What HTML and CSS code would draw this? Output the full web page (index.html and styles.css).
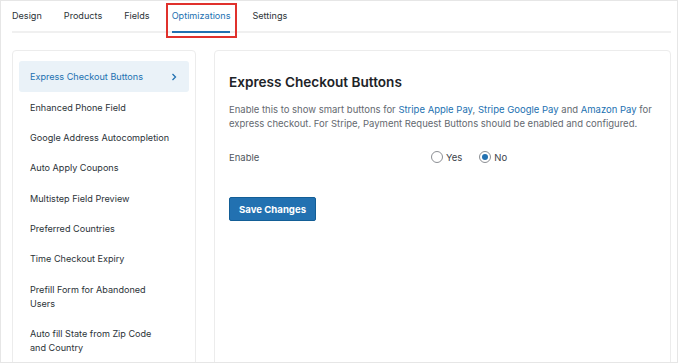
FILE: index.html
```html
<!DOCTYPE html>
<html lang="en">
	<head>
		<meta charset="UTF-8" />
		<meta name="viewport" content="width=device-width, initial-scale=1.0" />
		<title>Optimizations</title>
		<link rel="stylesheet" href="styles.css">
	</head>
	<body>
		<div class="frame">
			<nav class="tabs">
				<a class="tab">Design</a>
				<a class="tab">Products</a>
				<a class="tab">Fields</a>
				<a class="tab active">Optimizations</a>
				<a class="tab">Settings</a>
			</nav>

			<div class="layout">
				<aside class="sidebar">
					<a class="side-item active">
						<span class="side-label">Express Checkout Buttons</span>
						<svg class="chevron" width="6" height="8" viewBox="0 0 6 8"><path d="M1.5 1 L4.5 4 L1.5 7" fill="none" stroke="#2271b1" stroke-width="1.3" /></svg>
					</a>
					<a class="side-item"><span class="side-label">Enhanced Phone Field</span></a>
					<a class="side-item"><span class="side-label">Google Address Autocompletion</span></a>
					<a class="side-item"><span class="side-label">Auto Apply Coupons</span></a>
					<a class="side-item"><span class="side-label">Multistep Field Preview</span></a>
					<a class="side-item"><span class="side-label">Preferred Countries</span></a>
					<a class="side-item"><span class="side-label">Time Checkout Expiry</span></a>
					<a class="side-item"><span class="side-label">Prefill Form for Abandoned<br />Users</span></a>
					<a class="side-item"><span class="side-label">Auto fill State from Zip Code<br />and Country</span></a>
				</aside>

				<section class="panel">
					<h2>Express Checkout Buttons</h2>
					<p class="desc">
						Enable this to show smart buttons for <a>Stripe Apple Pay</a>, <a>Stripe Google Pay</a> and <a>Amazon Pay</a> for
						express checkout. For Stripe, Payment Request Buttons should be enabled and configured.
					</p>

					<div class="field-row">
						<span class="field-label">Enable</span>
						<div class="radios">
							<label class="radio"><input type="radio" name="enable" value="yes" /> Yes</label>
							<label class="radio"><input type="radio" name="enable" value="no" checked /> No</label>
						</div>
					</div>

					<button class="save-btn">Save Changes</button>
				</section>
			</div>
		</div>
	</body>
</html>
```

FILE: styles.css
```css
html,
body {
	margin: 0;
	background: #fff;
	overflow: hidden;
}
body {
	font-family: Inter, "Noto Sans", sans-serif;
	font-size: 9.5px;
	color: #1e1e1e;
}
a {
	text-decoration: none;
	cursor: pointer;
}
.frame {
	width: 678px;
	height: 363px;
	box-sizing: border-box;
	border: 1px solid #e6e6e6;
	padding: 8px 6px 0 11px;
	overflow: hidden;
}
.tabs {
	display: flex;
	gap: 22px;
	border-bottom: 2px solid #f0f0f0;
}
.tab {
	position: relative;
	font-size: 9.1px;
	line-height: 14px;
	padding-bottom: 8px;
	margin-bottom: -2px;
	border-bottom: 2px solid transparent;
	color: #2c3338;
}
.tab.active {
	color: #2271b1;
	border-bottom-color: #2271b1;
}
.tab.active::after {
	content: "";
	position: absolute;
	left: -6px;
	right: -7px;
	top: -6px;
	bottom: -7px;
	border: 2px solid #e0312c;
}
.layout {
	display: flex;
	gap: 18px;
	margin-top: 17px;
}
.sidebar {
	width: 184px;
	height: 340px;
	box-sizing: border-box;
	border: 1px solid #ececec;
	border-radius: 4px;
	padding: 10px 6px;
}
.side-item {
	display: flex;
	align-items: center;
	justify-content: space-between;
	padding: 8.2px 11px;
	font-size: 9.1px;
	line-height: 14px;
	color: #2c3338;
	border-radius: 3px;
}
.side-item.active {
	background: #eaf2f8;
	color: #2271b1;
	padding-top: 8.7px;
	padding-bottom: 8.7px;
}
.chevron {
	margin-right: 1px;
}
.panel {
	flex: 1;
	height: 340px;
	box-sizing: border-box;
	border: 1px solid #ececec;
	border-radius: 4px;
	padding: 21px 14px;
}
.panel h2 {
	margin: 0;
	font-size: 13.6px;
	line-height: 20px;
	font-weight: 600;
	color: #1d2327;
}
.desc {
	margin: 11px 0 0;
	font-size: 9.5px;
	line-height: 14px;
	color: #646970;
}
.desc a {
	color: #2271b1;
}
.field-row {
	display: flex;
	align-items: center;
	margin-top: 19px;
	height: 14px;
}
.field-label {
	width: 202px;
	color: #50575e;
}
.radios {
	display: flex;
	gap: 17px;
}
.radio {
	display: flex;
	align-items: center;
	gap: 3px;
	color: #3c434a;
}
.radio input {
	appearance: none;
	width: 12px;
	height: 12px;
	margin: 0;
	border: 1px solid #8c8f94;
	border-radius: 50%;
	background: #fff;
	display: grid;
	place-items: center;
}
.radio input:checked::before {
	content: "";
	width: 6px;
	height: 6px;
	border-radius: 50%;
	background: #2271b1;
}
.save-btn {
	display: block;
	margin-top: 33px;
	width: 87px;
	height: 24px;
	padding: 0;
	background: #2271b1;
	border: 1px solid #135e96;
	border-radius: 2px;
	color: #fff;
	font-family: inherit;
	font-size: 9.6px;
	font-weight: 700;
	cursor: pointer;
}
```
